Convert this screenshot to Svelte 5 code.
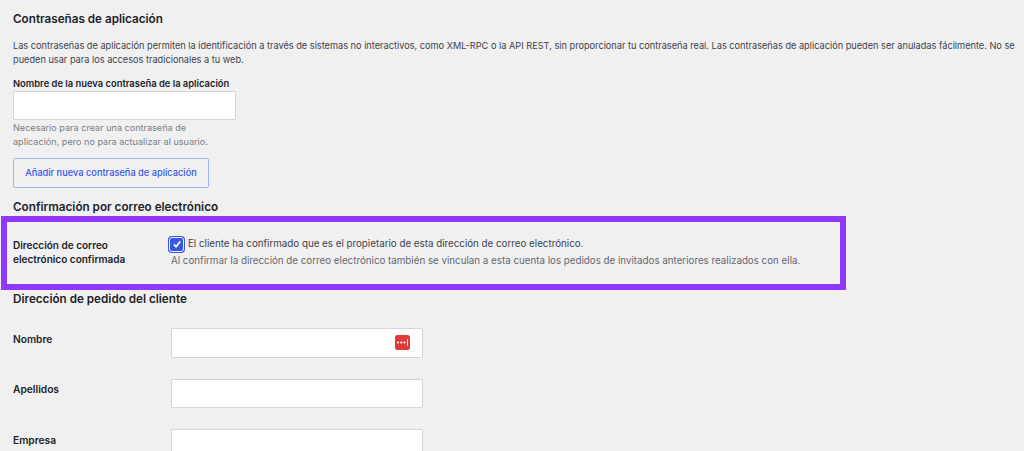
<script>
  const addressFields = [
    { label: "Nombre", hasKey: true },
    { label: "Apellidos" },
    { label: "Empresa" }
  ];
</script>

<main>
  <h2 class="first">Contraseñas de aplicación</h2>
  <p class="intro">Las contraseñas de aplicación permiten la identificación a través de sistemas no interactivos, como XML-RPC o la API REST, sin proporcionar tu contraseña real. Las contraseñas de aplicación pueden ser anuladas fácilmente. No se pueden usar para los accesos tradicionales a tu web.</p>

  <label class="new-name" for="new-pass">Nombre de la nueva contraseña de la aplicación</label>
  <input id="new-pass" class="name-input" type="text" />
  <p class="hint">Necesario para crear una contraseña de aplicación, pero no para actualizar al usuario.</p>
  <button type="button">Añadir nueva contraseña de aplicación</button>

  <h2 class="confirm-title">Confirmación por correo electrónico</h2>
  <section class="highlight">
    <div class="row-label">Dirección de correo electrónico confirmada</div>
    <div class="row-body">
      <div class="check-line">
        <span class="check">
          <svg viewBox="0 0 12 12" width="10" height="10" aria-hidden="true">
            <path d="M2.2 6.4 4.9 9.2 9.9 2.8" fill="none" stroke="#fff" stroke-width="2" />
          </svg>
        </span>
        <span>El cliente ha confirmado que es el propietario de esta dirección de correo electrónico.</span>
      </div>
      <p class="note">Al confirmar la dirección de correo electrónico también se vinculan a esta cuenta los pedidos de invitados anteriores realizados con ella.</p>
    </div>
  </section>

  <h2 class="address-title">Dirección de pedido del cliente</h2>
  <div class="fields">
    {#each addressFields as field}
      <div class="field">
        <span class="field-label">{field.label}</span>
        <div class="field-box">
          {#if field.hasKey}
            <span class="key">
              <svg viewBox="0 0 15 15" width="15" height="15" aria-hidden="true">
                <circle cx="3" cy="7.5" r="1.1" fill="#fff" />
                <circle cx="6.2" cy="7.5" r="1.1" fill="#fff" />
                <circle cx="9.4" cy="7.5" r="1.1" fill="#fff" />
                <rect x="12" y="4.2" width="1" height="6.6" fill="#fff" />
              </svg>
            </span>
          {/if}
        </div>
      </div>
    {/each}
  </div>
</main>

<style>
  :global(body) { background: #f0f0f1; overflow: hidden; }
  main {
    height: 451px;
    overflow: hidden;
    font-family: Inter, "Liberation Sans", sans-serif;
    font-size: 9.77px;
    line-height: 14px;
    color: #50575e;
    -webkit-font-smoothing: antialiased;
  }
  h2 {
    margin: 0 0 0 13px;
    font-size: 11.7px;
    line-height: 16px;
    font-weight: 600;
    color: #1d2327;
  }
  .first { padding-top: 11px; }
  .intro { margin: 12px 5px 0 13px; font-size: 9.2px; color: #3c434a; }
  .new-name {
    display: block;
    margin: 10px 0 0 13px;
    font-size: 9.4px;
    font-weight: 600;
    color: #1d2327;
  }
  .name-input {
    display: block;
    box-sizing: border-box;
    width: 223px;
    height: 29px;
    margin: 0 0 0 13px;
    background: #fff;
    border: 1px solid #d5d5d7;
    border-radius: 1px;
    padding: 0;
  }
  .hint { width: 200px; margin: 1px 0 0 13px; font-size: 9.1px; color: #797f85; }
  button {
    display: block;
    box-sizing: border-box;
    width: 196px;
    height: 30px;
    margin: 9px 0 0 13px;
    padding: 0;
    background: #f1f1f3;
    border: 1px solid #a6b1f6;
    border-radius: 2px;
    color: #3858e9;
    font: 500 9.25px/14px Inter, "Liberation Sans", sans-serif;
  }
  .confirm-title { margin-top: 11px; }
  .highlight {
    display: flex;
    box-sizing: border-box;
    width: 845px;
    height: 74px;
    margin: 1px 0 0 1px;
    border: 6px solid #9038ff;
  }
  .row-label {
    width: 164px;
    padding: 17px 30px 0 6px;
    box-sizing: border-box;
    font-size: 10px;
    line-height: 13.5px;
    font-weight: 600;
    color: #1d2327;
  }
  .row-body { padding-top: 15px; }
  .check-line { display: flex; align-items: center; gap: 5px; color: #3c434a; }
  .check {
    display: flex;
    align-items: center;
    justify-content: center;
    box-sizing: border-box;
    width: 13px;
    height: 13px;
    margin-left: -1px;
    background: #3858e9;
    border-radius: 2px;
    outline: 1px solid #f1f1f3;
    box-shadow: 0 0 0 2px #3858e9;
  }
  .note { margin: 3px 0 0; color: #646970; }
  .address-title { margin-top: 1px; }
  .fields { margin-top: 21px; }
  .field { display: flex; height: 50.5px; }
  .field-label {
    box-sizing: border-box;
    width: 171px;
    padding: 3.5px 0 0 13px;
    font-size: 10.2px;
    font-weight: 600;
    color: #1d2327;
  }
  .field-box {
    display: flex;
    align-items: center;
    justify-content: flex-end;
    box-sizing: border-box;
    width: 252px;
    height: 29.5px;
    padding-right: 12px;
    background: #fff;
    border: 1px solid #d5d5d7;
    border-radius: 1px;
  }
  .key {
    display: block;
    width: 15px;
    height: 15px;
    background: #e23b37;
    border-radius: 2.5px;
  }
  .key svg { display: block; }
</style>
